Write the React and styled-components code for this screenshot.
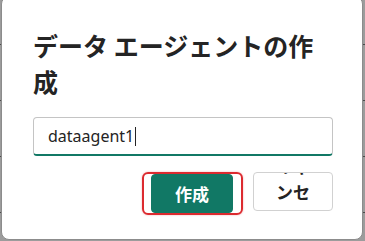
import React from "react";
import styled, { createGlobalStyle } from "styled-components";

const GlobalStyle = createGlobalStyle`
  html, body {
    margin: 0;
    padding: 0;
    width: 365px;
    height: 241px;
    overflow: hidden;
  }
  body {
    font-family: "Noto Sans", "Noto Sans CJK JP", sans-serif;
    color: #242424;
  }
`;

const Backdrop = styled.div`
  width: 365px;
  height: 241px;
  overflow: hidden;
  background:
    repeating-linear-gradient(
      to bottom,
      transparent 0 44px,
      #4a4a4a 44px 45px,
      transparent 45px 56px
    ),
    #9c9c9c;
`;

const Dialog = styled.div`
  box-sizing: border-box;
  margin: -4px 0 0 1px;
  width: 362px;
  height: 244px;
  background: #ffffff;
  border: 1px solid #8c8c8c;
  border-radius: 8px;
  padding: 30px 29px 0 31px;
  display: flex;
  flex-direction: column;
`;

const Title = styled.h2`
  margin: 0;
  width: 296px;
  font-family: "Noto Sans CJK JP", "Noto Sans", sans-serif;
  font-size: 25px;
  font-weight: 700;
  line-height: 36px;
  color: #242424;
`;

const Field = styled.div`
  box-sizing: border-box;
  margin-top: 18px;
  height: 39px;
  width: 300px;
  display: flex;
  align-items: center;
  padding: 0 14px;
  border: 1px solid #c4c4c4;
  border-bottom: 2px solid #117865;
  border-radius: 4px;
  font-size: 16px;
  color: #242424;
`;

const Caret = styled.span`
  display: inline-block;
  width: 1px;
  height: 19px;
  margin-left: 1px;
  background: #242424;
`;

const Actions = styled.div`
  margin-top: 16px;
  width: 300px;
  display: flex;
  justify-content: flex-end;
  align-items: flex-start;
  gap: 10px;
`;

const Highlight = styled.span`
  display: flex;
  border: 2px solid #dc2a2f;
  border-radius: 6px;
  padding: 0 8px 0 7px;
  box-shadow: 0 0 2px rgba(220, 42, 47, 0.4);
`;

const Button = styled.button`
  box-sizing: border-box;
  width: ${(p) => (p.$primary ? "82px" : "80px")};
  height: 39px;
  border-radius: 4px;
  border: 1px solid ${(p) => (p.$primary ? "#117865" : "#d1d1d1")};
  background: ${(p) => (p.$primary ? "#117865" : "#ffffff")};
  color: ${(p) => (p.$primary ? "#ffffff" : "#242424")};
  font-family: "Noto Sans CJK JP", sans-serif;
  font-size: 17px;
  font-weight: 700;
  line-height: 26px;
  padding: 0 15px;
  display: flex;
  align-items: center;
  justify-content: center;
  overflow: hidden;
  text-align: center;
`;

export default function App() {
  return (
    <>
      <GlobalStyle />
      <Backdrop>
        <Dialog>
          <Title>データ エージェントの作成</Title>
          <Field>
            dataagent1
            <Caret />
          </Field>
          <Actions>
            <Highlight>
              <Button $primary>作成</Button>
            </Highlight>
            <Button>キャンセル</Button>
          </Actions>
        </Dialog>
      </Backdrop>
    </>
  );
}
